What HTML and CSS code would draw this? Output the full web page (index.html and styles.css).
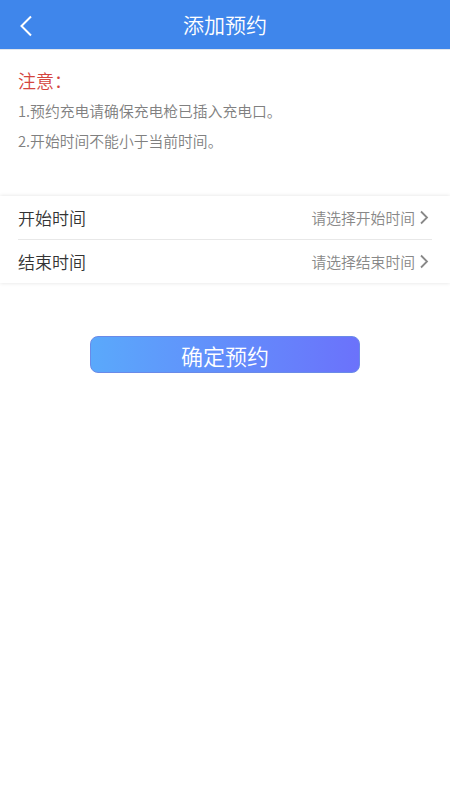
FILE: index.html
```html
<!DOCTYPE html>
<html lang="zh">
<head>
<meta charset="utf-8">
<link rel="stylesheet" href="styles.css">
</head>
<body>
<header class="topbar">
  <span class="back">
    <svg width="14" height="22" viewBox="0 0 14 22"><path d="M12 1.5 L2.5 11 L12 20.5" fill="none" stroke="#fff" stroke-width="2"/></svg>
  </span>
  <h1 class="title">添加预约</h1>
</header>
<section class="notice">
  <div class="notice-title">注意：</div>
  <p class="notice-line">1.预约充电请确保充电枪已插入充电口。</p>
  <p class="notice-line">2.开始时间不能小于当前时间。</p>
</section>
<section class="card">
  <div class="row">
    <span class="label">开始时间</span>
    <span class="value">请选择开始时间<svg class="chev" width="10" height="15" viewBox="0 0 10 15"><path d="M2 1.5 L8 7.5 L2 13.5" fill="none" stroke="#888" stroke-width="1.8"/></svg></span>
  </div>
  <div class="row">
    <span class="label">结束时间</span>
    <span class="value">请选择结束时间<svg class="chev" width="10" height="15" viewBox="0 0 10 15"><path d="M2 1.5 L8 7.5 L2 13.5" fill="none" stroke="#888" stroke-width="1.8"/></svg></span>
  </div>
</section>
<div class="actions">
  <button class="confirm">确定预约</button>
</div>
</body>
</html>
```
FILE: styles.css
```css
* { box-sizing: border-box; }
html, body { margin: 0; padding: 0; background: #fff; }
body {
  width: 450px;
  height: 800px;
  font-family: "Noto Sans CJK SC", "Noto Sans", sans-serif;
  font-weight: 350;
}
.topbar {
  height: 50px;
  background: #3f86eb;
  display: flex;
  align-items: center;
  justify-content: center;
  position: relative;
  border-bottom: 1px solid #e2e6ec;
}
.back {
  position: absolute;
  left: 19px;
  top: 15px;
  display: flex;
}
.title {
  margin: 0;
  font-size: 21px;
  font-weight: 350;
  color: #fff;
  line-height: 1;
}
.notice {
  padding: 18px 18px 0;
  height: 146px;
}
.notice-title {
  color: #d4453f;
  font-size: 18px;
  line-height: 24px;
  margin-bottom: 4px;
}
.notice-line {
  margin: 0;
  font-size: 14.8px;
  color: #808080;
  line-height: 30px;
}
.card {
  box-shadow: 0 0 4px rgba(0,0,0,0.12);
  padding: 0 18px;
  background: #fff;
}
.row {
  height: 43px;
  display: flex;
  align-items: center;
  justify-content: space-between;
}
.row + .row { border-top: 1px solid #e8e8e8; height: 44px; }
.label {
  font-size: 17px;
  color: #333;
}
.value {
  font-size: 14.8px;
  color: #888;
  display: flex;
  align-items: center;
  gap: 4px;
}
.chev { margin-right: 3px; }
.actions {
  display: flex;
  justify-content: center;
  padding-top: 53px;
}
.confirm {
  width: 270px;
  height: 37px;
  border: 1px solid #6a8ae8;
  border-radius: 8px;
  background: linear-gradient(90deg, #5aa9fb, #6b72fb);
  color: #fff;
  font-family: "Noto Sans CJK SC", sans-serif;
  font-weight: 350;
  font-size: 22px;
  padding: 0;
}
```
